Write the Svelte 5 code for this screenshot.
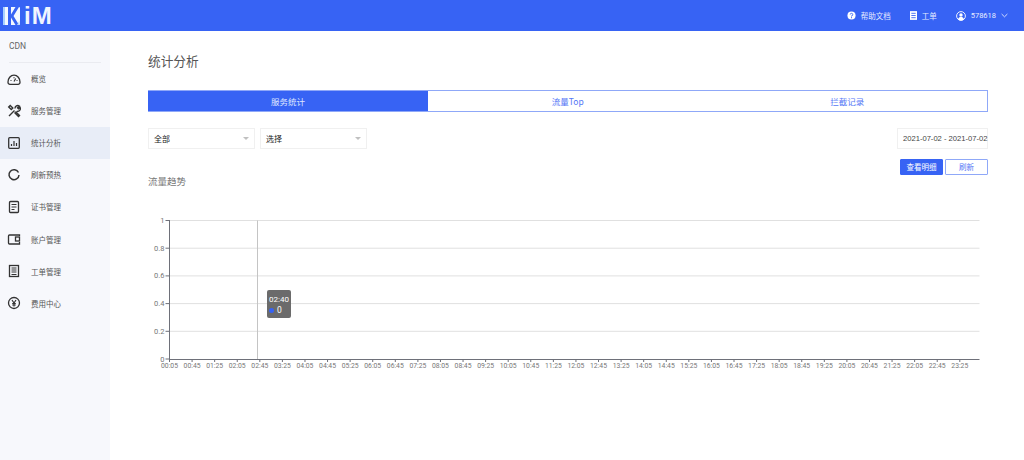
<script>
	const menu = [
		{ name: '概览', icon: 'gauge' },
		{ name: '服务管理', icon: 'tools' },
		{ name: '统计分析', icon: 'chart', active: true },
		{ name: '刷新预热', icon: 'refresh' },
		{ name: '证书管理', icon: 'doc' },
		{ name: '账户管理', icon: 'wallet' },
		{ name: '工单管理', icon: 'order' },
		{ name: '费用中心', icon: 'yen' }
	];
	const tabs = ['服务统计', '流量Top', '拦截记录'];

	// chart geometry
	const left = 169.5, right = 979.5, top = 220.5, bottom = 359;
	const yTicks = [1, 0.8, 0.6, 0.4, 0.2, 0];
	const yOf = (v) => bottom - (bottom - top) * v;

	const step = 22.58;
	const xTicks = Array.from({ length: 36 }, (_, i) => {
		const mins = 5 + i * 40;
		const h = String(Math.floor(mins / 60)).padStart(2, '0');
		const m = String(mins % 60).padStart(2, '0');
		return { x: left + i * step, label: `${h}:${m}` };
	});
</script>

<div class="page">
	<header>
		<div class="logo">
			<span class="logo-k">
				<svg viewBox="0 0 17 18" width="17" height="18">
					<rect width="17" height="18" rx="1" fill="#f4f8ff" />
					<rect width="2" height="18" fill="#a9d0ff" />
					<path d="M5 0h3v7.500L12.500 0H16l-5.500 9L16 18h-3.500L8 10.500V18H5z" fill="#3763f4" />
					<path d="M14 18l2.500-4.500V18z" fill="#bcd8ff" />
				</svg>
			</span>
			<span class="logo-text">iM</span>
		</div>
		<nav>
			<span class="nav-item">
				<svg viewBox="0 0 10 10" width="9" height="9">
					<circle cx="5" cy="5" r="4.500" fill="#fff" />
					<path d="M3.600 3.900A1.400 1.400 0 1 1 5 5.400V6" fill="none" stroke="#3763f4" stroke-width="1" />
					<circle cx="5" cy="7.400" r=".6" fill="#3763f4" />
				</svg>
				帮助文档
			</span>
			<span class="nav-item">
				<svg viewBox="0 0 8 10" width="7" height="9">
					<rect width="8" height="10" fill="#fff" />
					<path d="M1.500 2.500h5M1.500 5h5M1.500 7.500h5" stroke="#3763f4" stroke-width="1" />
				</svg>
				工单
			</span>
			<span class="nav-item user">
				<svg viewBox="0 0 10 10" width="10" height="10">
					<circle cx="5" cy="5" r="4.400" fill="none" stroke="#fff" stroke-width=".9" />
					<circle cx="5" cy="4" r="1.700" fill="#fff" />
					<path d="M2 8.200C2.600 6.600 3.600 6 5 6s2.400.6 3 2.200A4 4 0 0 1 2 8.200z" fill="#fff" />
				</svg>
				578618
				<svg class="chev" viewBox="0 0 8 5" width="7" height="5">
					<path d="M.7.8 4 4 7.300.8" fill="none" stroke="#fff" stroke-width=".9" />
				</svg>
			</span>
		</nav>
	</header>

	<div class="body">
		<aside>
			<div class="side-title">CDN</div>
			<ul>
				{#each menu as item}
					<li class:active={item.active}>
						<svg viewBox="0 0 14 14" width="14" height="14" fill="none" stroke="#333" stroke-width="1.200">
							{#if item.icon === 'gauge'}
								<path d="M3 12.300h8a2 2 0 0 0 2-2.300C13 6.500 10.500 3.200 7 3.200S1 6.500 1 10a2 2 0 0 0 2 2.300z" stroke-width="1.300" />
								<path d="M7 9.500 8.700 6.500M3.500 8.500h1M9.500 8.500h1M7 5.200v1" />
							{:else if item.icon === 'tools'}
								<path d="M2 12l5.500-5.500M3.200 1.500 1.700 3l2.600 2.600 1.500-1.500zM8 4.500A2.800 2.800 0 0 1 12.300 2L10.500 3.800l1 1L13 3.300A2.800 2.800 0 0 1 9.800 7.300M7.500 8.500 11.500 12.500l1-1L8.500 7.500" stroke-width="1.400" />
							{:else if item.icon === 'chart'}
								<rect x="1.700" y="1.700" width="10.600" height="10.600" rx="1" stroke-width="1.300" />
								<path d="M4.500 10V8M7 10V5M9.500 10V7" />
							{:else if item.icon === 'refresh'}
								<path d="M11.500 4.500A5 5 0 1 0 12 7" stroke-width="1.500" />
							{:else if item.icon === 'doc'}
								<rect x="2.500" y="1.500" width="9" height="11" rx="1" stroke-width="1.300" />
								<path d="M4.500 4.500h5M4.500 7h5M4.500 9.500h3" />
							{:else if item.icon === 'wallet'}
								<path d="M12.500 4V3H2.500a1 1 0 0 0-1 1v7a1 1 0 0 0 1 1h10V10" stroke-width="1.300" />
								<rect x="8.500" y="5" width="4" height="4" stroke-width="1.300" />
							{:else if item.icon === 'order'}
								<rect x="2.500" y="1.500" width="9" height="11" stroke-width="1.300" />
								<path d="M4.500 4h5M4.500 6h5M4.500 8h5M4.500 10.500h5" />
							{:else}
								<circle cx="7" cy="7" r="5.500" stroke-width="1.300" />
								<path d="M5 4 7 7l2-3M7 7v3.500M5.200 7.500h3.600M5.200 9h3.600" />
							{/if}
						</svg>
						<span>{item.name}</span>
					</li>
				{/each}
			</ul>
		</aside>

		<main>
			<h1>统计分析</h1>

			<div class="tabs">
				{#each tabs as tab, i}
					<div class="tab" class:on={i === 0}>{tab}</div>
				{/each}
			</div>

			<div class="filters">
				<div class="select">全部<i></i></div>
				<div class="select">选择<i></i></div>
				<div class="date">2021-07-02 - 2021-07-02</div>
			</div>

			<div class="actions">
				<button class="primary">查看明细</button>
				<button>刷新</button>
			</div>

			<h2>流量趋势</h2>
		</main>
	</div>

	<!-- the chart is a free canvas, page coordinates are the easiest here -->
	<svg class="chart" viewBox="0 0 1024 460" width="1024" height="460">
		{#each yTicks as v}
			{#if v > 0}
				<line x1={left} x2={right} y1={yOf(v)} y2={yOf(v)} stroke="#e0e0e0" />
			{/if}
			<line x1={left - 4} x2={left} y1={yOf(v)} y2={yOf(v)} stroke="#6e7079" />
			<text class="ylabel" x={left - 5} y={yOf(v) + 2.500} text-anchor="end">{v}</text>
		{/each}
		<line x1={257.500} x2={257.500} y1={top} y2={bottom} stroke="#c4c4c4" />
		<line x1={left} x2={left} y1={top - 0.5} y2={bottom} stroke="#6e7079" />
		<line x1={left - 0.5} x2={right} y1={bottom + 0.5} y2={bottom + 0.5} stroke="#6e7079" />
		{#each xTicks as t}
			<line x1={t.x} x2={t.x} y1={bottom} y2={bottom + 3} stroke="#6e7079" />
			<text x={t.x} y={bottom + 9} text-anchor="middle">{t.label}</text>
		{/each}
	</svg>

	<div class="tooltip">
		<div>02:40</div>
		<div class="val"><b></b>0</div>
	</div>
</div>

<style>
	:global(body) {
		margin: 0;
		background: #fff;
		font-family: "Noto Sans CJK SC", "Noto Sans", sans-serif;
	}
	.page {
		position: relative;
		width: 1024px;
		height: 460px;
		overflow: hidden;
	}
	header {
		height: 31px;
		background: #3763f4;
		display: flex;
		align-items: center;
		justify-content: space-between;
		color: #fff;
	}
	.logo {
		display: flex;
		align-items: center;
		padding-left: 3px;
		gap: 4px;
	}
	.logo-k {
		display: flex;
	}
	.logo-text {
		font: bold 24px/1 "Liberation Sans", sans-serif;
		letter-spacing: 1px;
		color: #f0f5ff;
	}
	nav {
		display: flex;
		align-items: center;
		padding-right: 16px;
		font-size: 7.500px;
		color: #e6ecff;
	}
	.nav-item {
		display: flex;
		align-items: center;
		gap: 5px;
		margin-left: 19px;
	}
	.user {
		font-family: Roboto, sans-serif;
		font-size: 7.500px;
	}
	.body {
		display: flex;
		height: 429px;
	}
	aside {
		width: 110px;
		flex: none;
		background: #f7f8fc;
	}
	.side-title {
		margin: 0 9px;
		height: 31.500px;
		font: 8.500px/31px Roboto, sans-serif;
		color: #666;
		border-bottom: 1px solid #eaebf0;
		box-sizing: border-box;
	}
	ul {
		list-style: none;
		margin: 0;
		padding: 0;
	}
	li {
		height: 32.100px;
		display: flex;
		align-items: center;
		gap: 10px;
		padding-left: 7px;
		font-size: 7.500px;
		color: #555;
	}
	li.active {
		background: #e8edf7;
	}
	main {
		flex: 1;
		padding: 0 36px 0 38px;
		min-width: 0;
	}
	h1 {
		margin: 0;
		padding-top: 20px;
		height: 59px;
		box-sizing: border-box;
		font-size: 12.700px;
		line-height: 20px;
		font-weight: 400;
		color: #555;
	}
	.tabs {
		display: flex;
		height: 22px;
		border: 1px solid #8fa8f8;
		box-sizing: border-box;
	}
	.tab {
		flex: 1;
		text-align: center;
		font-size: 8.500px;
		line-height: 20px;
		color: #5577f6;
	}
	.tab.on {
		flex: none;
		width: 280px;
		margin-left: -1px;
		background: #3763f4;
		color: #dfe6ff;
	}
	.filters {
		display: flex;
		gap: 5px;
		margin-top: 16px;
		font-size: 8px;
		color: #222;
	}
	.select {
		width: 107px;
		height: 21px;
		box-sizing: border-box;
		border: 1px solid #f0f0f0;
		padding-left: 5px;
		line-height: 19px;
		position: relative;
	}
	.select i {
		position: absolute;
		right: 5px;
		top: 8px;
		border: 3.500px solid transparent;
		border-top: 3.500px solid #c0c0c0;
		border-bottom: 0;
	}
	.date {
		margin-left: auto;
		width: 91px;
		height: 21px;
		box-sizing: border-box;
		border: 1px solid #f0f0f0;
		padding-left: 5px;
		font: 7.600px/19px "Liberation Sans", sans-serif;
		white-space: nowrap;
		color: #444;
	}
	.actions {
		display: flex;
		justify-content: flex-end;
		gap: 2px;
		margin-top: 10px;
	}
	button {
		width: 43px;
		height: 16px;
		padding: 0;
		border: 1px solid #8fa8f8;
		border-radius: 1px;
		background: #fff;
		color: #5577f6;
		font: 7.500px/14px "Noto Sans CJK SC", sans-serif;
	}
	button.primary {
		background: #3763f4;
		border-color: #3763f4;
		color: #fff;
	}
	h2 {
		margin: -1px 0 0;
		font-size: 9.500px;
		line-height: 14px;
		font-weight: 400;
		color: #777;
	}
	.chart {
		position: absolute;
		left: 0;
		top: 0;
	}
	.chart text {
		font: 6.800px Roboto, sans-serif;
		fill: #777;
	}
	.chart text.ylabel {
		font-size: 7.500px;
	}
	.tooltip {
		position: absolute;
		left: 267px;
		top: 290px;
		width: 24px;
		height: 28px;
		box-sizing: border-box;
		padding: 4px 0 0 2px;
		background: #6b6b6b;
		border-radius: 2px;
		font: 8px/11px Roboto, sans-serif;
		color: #fff;
	}
	.val {
		display: flex;
		align-items: center;
		gap: 3px;
		font-size: 8.500px;
	}
	.val b {
		width: 5px;
		height: 5px;
		border-radius: 50%;
		background: #3763f4;
	}
</style>
